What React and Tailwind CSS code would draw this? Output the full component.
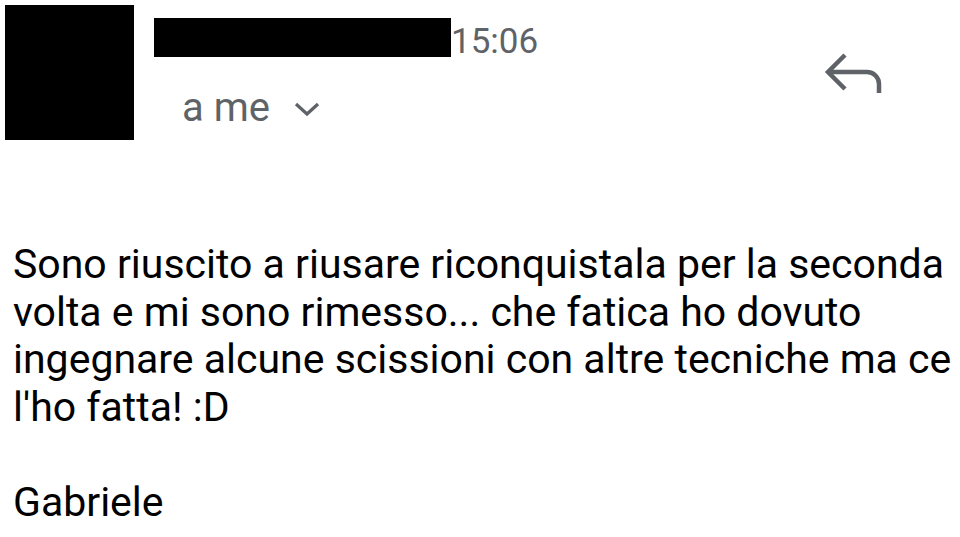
export default function App() {
  return (
    <div className="w-[960px] h-[537px] bg-white overflow-hidden" style={{ fontFamily: "Roboto, 'Noto Sans', sans-serif" }}>
      <div className="flex items-start pt-[5px] pl-[5px]">
        <div className="w-[129px] h-[135px] bg-black shrink-0" />
        <div className="flex flex-col ml-[20px]">
          <div className="flex items-end mt-[13px] h-[39px]">
            <div className="w-[297px] h-[39px] bg-black" />
            <span className="text-[35px] leading-[39px] text-[#5f6368] -mb-[4px]">15:06</span>
          </div>
          <div className="flex items-center mt-[33px] ml-[28px] h-[36px]">
            <span className="text-[40px] leading-[36px] text-[#5f6368]">a me</span>
            <svg className="ml-[24px] mt-[2px]" width="26" height="16" viewBox="0 0 26 16">
              <polyline points="2,3 13,13 24,3" fill="none" stroke="#5f6368" strokeWidth="3.2" />
            </svg>
          </div>
        </div>
        <div className="ml-auto mr-[76px] mt-[40px]">
          <svg width="60" height="52" viewBox="0 0 60 52">
            <polyline points="21,10 4,27 21,44" fill="none" stroke="#5f6368" strokeWidth="4.5" />
            <path d="M4 27 H43 A12 12 0 0 1 55 39 V48" fill="none" stroke="#5f6368" strokeWidth="4.5" />
          </svg>
        </div>
      </div>
      <div className="mt-[101px] px-[13px] text-[41px] leading-[47.5px] text-black whitespace-pre">
        {"Sono riuscito a riusare riconquistala per la seconda\nvolta e mi sono rimesso... che fatica ho dovuto\ningegnare alcune scissioni con altre tecniche ma ce\nl'ho fatta! :D\n\nGabriele"}
      </div>
    </div>
  );
}
